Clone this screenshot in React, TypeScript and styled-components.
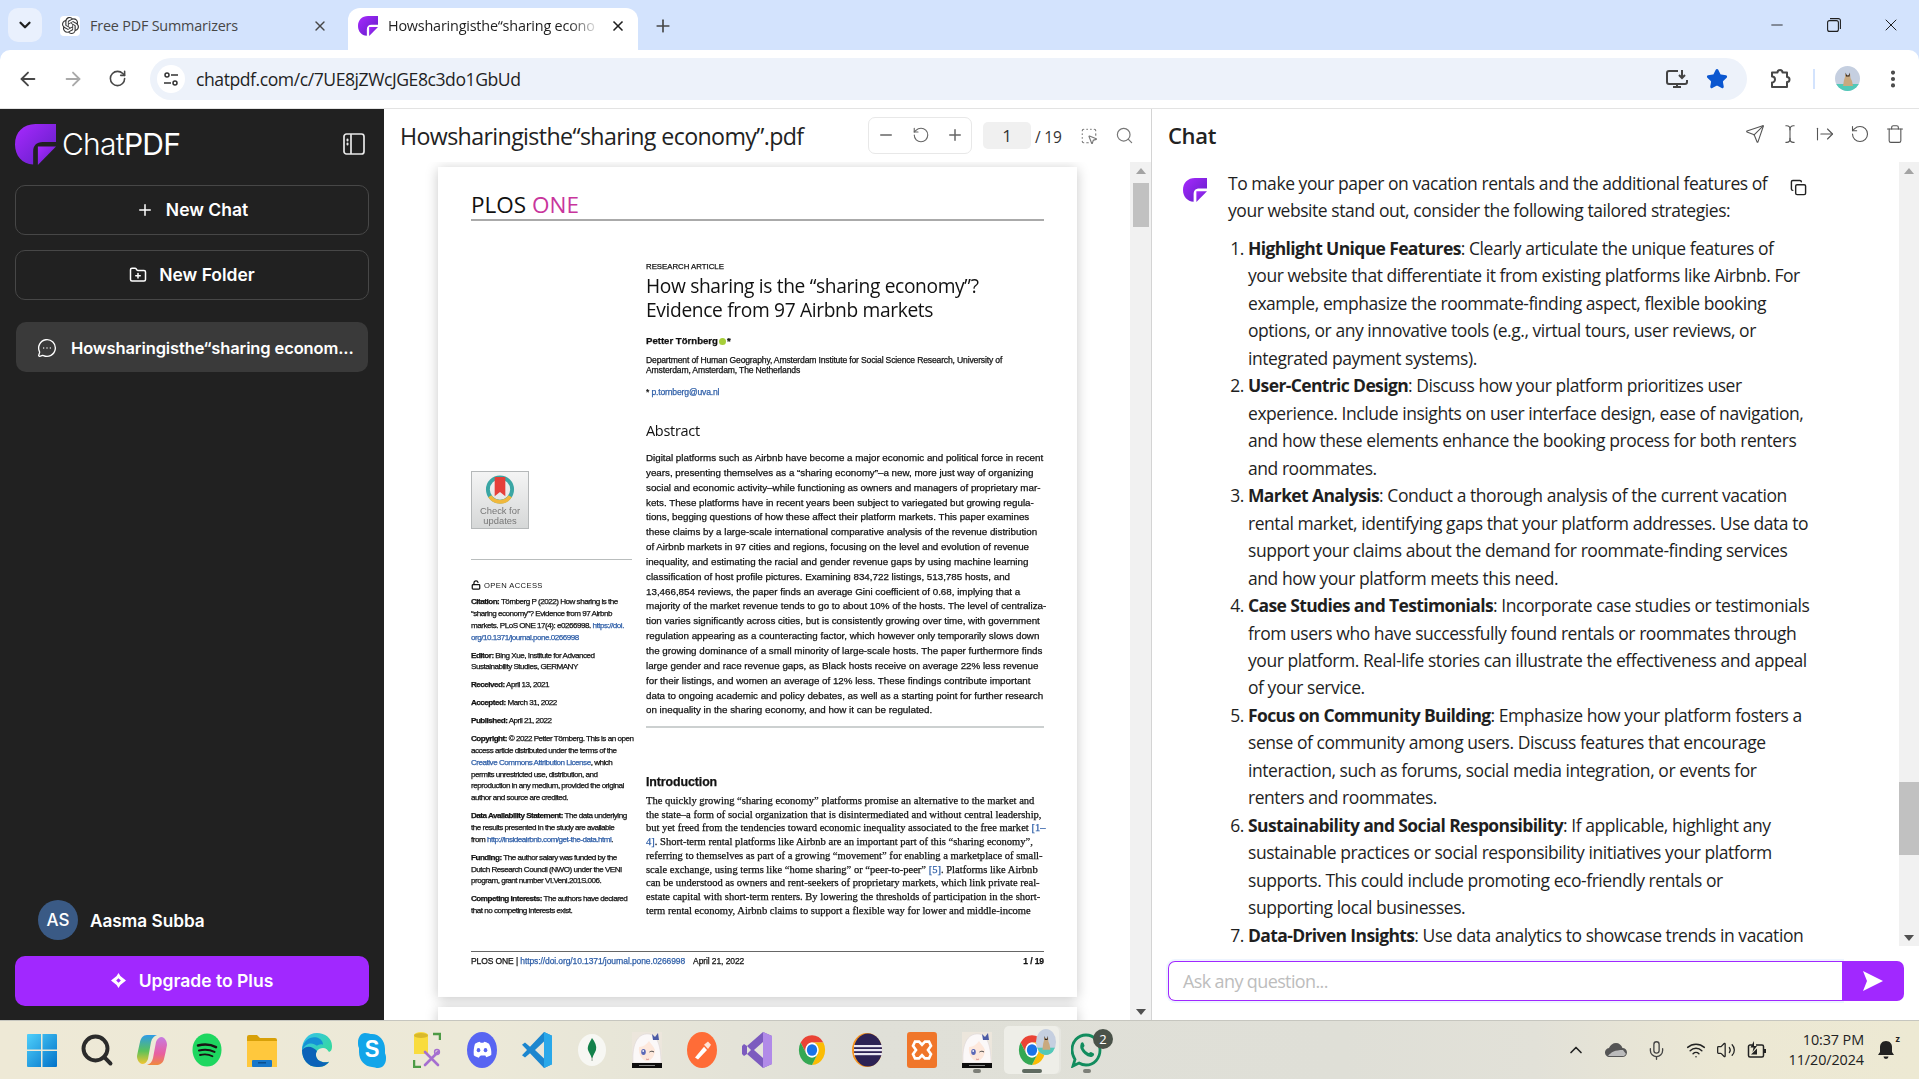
import React from 'react';
import styled, { createGlobalStyle } from 'styled-components';
import {
  ArrowLeft, ArrowRight, RotateCw, RotateCcw, Star, EllipsisVertical, X, Minus, Plus, ChevronDown, ChevronUp,
  Send, TextCursor, ArrowRightFromLine, Trash, Copy, FolderPlus, MessageCircleMore, Search, Mic, Wifi, Volume2,
  LockOpen, SquareDashedMousePointer,
} from 'lucide-react';
import { SiOpenai } from 'react-icons/si';

const Global = createGlobalStyle`
  html, body { margin: 0; padding: 0; height: 100%; overflow: hidden; background: #fff; }
  * { box-sizing: border-box; }
`;

const Screen = styled.div`
  width: 1919px;
  height: 1079px;
  display: flex;
  flex-direction: column;
  overflow: hidden;
  background: #d3e3fd;
  font-family: 'Open Sans', 'Liberation Sans', sans-serif;
`;

/* browser chrome */
const TabStrip = styled.div`
  height: 50px;
  display: flex;
  align-items: flex-end;
  padding-left: 8px;
  flex: none;
`;
const TabMenu = styled.div`
  width: 34px;
  height: 34px;
  margin-bottom: 8px;
  border-radius: 10px;
  background: #e9f0fd;
  color: #1f1f1f;
  display: flex;
  align-items: center;
  justify-content: center;
`;
const Tab = styled.div<{ $active?: boolean }>`
  width: ${(p) => (p.$active ? '290px' : '298px')};
  height: 42px;
  margin-left: ${(p) => (p.$active ? '0' : '8px')};
  padding: 0 ${(p) => (p.$active ? '12px' : '20px')} 7px 10px;
  display: flex;
  align-items: center;
  gap: 10px;
  border-radius: 12px 12px 0 0;
  background: ${(p) => (p.$active ? '#fff' : 'transparent')};
  color: ${(p) => (p.$active ? '#1f1f1f' : '#474747')};
`;
const TabTitle = styled.div<{ $fade?: boolean }>`
  flex: 1;
  font-size: 14.4px;
  letter-spacing: -0.2px;
  white-space: nowrap;
  ${(p) => p.$fade && 'mask-image: linear-gradient(to right, #000 85%, transparent);'}
`;
const Favicon = styled.div`
  width: 20px;
  height: 20px;
  border-radius: 4px;
  background: #fff;
  color: #333;
  display: flex;
  align-items: center;
  justify-content: center;
  flex: none;
`;
const NewTab = styled.div`
  width: 50px;
  height: 42px;
  padding-bottom: 6px;
  display: flex;
  align-items: center;
  justify-content: center;
  color: #474747;
`;
const WindowControls = styled.div`
  margin-left: auto;
  height: 50px;
  display: flex;
  align-items: center;
  color: #1f1f1f;
`;
const WinButton = styled.div`
  width: 57px;
  display: flex;
  justify-content: center;
`;

const Toolbar = styled.div`
  height: 59px;
  flex: none;
  background: #fff;
  border-radius: 10px 10px 0 0;
  border-bottom: 1px solid #e3e3e3;
  display: flex;
  align-items: center;
  padding: 0 0 1px 5px;
  color: #474747;
`;
const NavButton = styled.div<{ $dim?: boolean }>`
  width: 45px;
  display: flex;
  justify-content: center;
  color: ${(p) => (p.$dim ? '#a9a9a9' : '#474747')};
`;
const Omnibox = styled.div`
  width: 1597px;
  height: 42px;
  margin-left: 10px;
  border-radius: 21px;
  background: #edf2fa;
  display: flex;
  align-items: center;
  padding: 0 19px 0 7px;
`;
const SiteInfo = styled.div`
  width: 28px;
  height: 28px;
  border-radius: 50%;
  background: #fff;
  display: flex;
  align-items: center;
  justify-content: center;
  margin-right: 11px;
`;
const Url = styled.div`
  flex: 1;
  font-size: 17.6px;
  letter-spacing: -0.45px;
  color: #1f1f1f;
`;
const OmniIcons = styled.div`
  display: flex;
  align-items: center;
  gap: 18px;
`;
const ToolbarEnd = styled.div`
  display: flex;
  align-items: center;
  margin-left: 21px;
`;
const Divider = styled.div`
  width: 2px;
  height: 20px;
  background: #d3e3fd;
  margin: 0 20px 0 21px;
`;
const ProfilePic = styled.div`
  width: 25px;
  height: 25px;
  border-radius: 50%;
  overflow: hidden;
  flex: none;
  margin-right: 22px;
`;

/* app */
const AppArea = styled.div`
  flex: 1;
  min-height: 0;
  display: flex;
  background: #fff;
`;

const Sidebar = styled.aside`
  width: 384px;
  flex: none;
  background: #212121;
  color: #fff;
  display: flex;
  flex-direction: column;
  padding: 14px 15px;
  font-family: Inter, 'Liberation Sans', sans-serif;
`;
const BrandRow = styled.div`
  height: 42px;
  display: flex;
  align-items: center;
  justify-content: space-between;
  margin-bottom: 20px;
  padding-right: 4px;
`;
const Brand = styled.div`
  display: flex;
  align-items: center;
  gap: 6px;
`;
const BrandName = styled.div`
  font-size: 30px;
  font-weight: 300;
  letter-spacing: -0.75px;
  span { font-weight: 400; }
`;
const SideButton = styled.div`
  height: 50px;
  margin-bottom: 15px;
  padding-bottom: 1px;
  border: 1px solid #474747;
  border-radius: 10px;
  display: flex;
  align-items: center;
  justify-content: center;
  gap: 12px;
  font-size: 17.5px;
  font-weight: 600;
`;
const ChatItem = styled.div`
  height: 50px;
  margin: 7px 1px 0;
  padding: 2px 12px 0 21px;
  border-radius: 10px;
  background: #3a3a3a;
  display: flex;
  align-items: center;
  gap: 14px;
  font-size: 16.5px;
  font-weight: 600;
  letter-spacing: -0.12px;
  white-space: nowrap;
`;
const UserRow = styled.div`
  margin-top: auto;
  padding-left: 23px;
  display: flex;
  align-items: center;
  gap: 12px;
  font-size: 17.2px;
  font-weight: 600;
`;
const Initials = styled.div`
  width: 40px;
  height: 40px;
  border-radius: 50%;
  background: #3a5a85;
  display: flex;
  align-items: center;
  justify-content: center;
  font-size: 17px;
  font-weight: 500;
`;
const Upgrade = styled.div`
  height: 50px;
  margin-top: 16px;
  padding-bottom: 2px;
  border-radius: 10px;
  background: #a128ff;
  display: flex;
  align-items: center;
  justify-content: center;
  gap: 13px;
  font-size: 17.5px;
  font-weight: 600;
`;

/* pdf viewer */
const PdfPanel = styled.section`
  width: 768px;
  flex: none;
  display: flex;
  flex-direction: column;
  border-right: 1px solid #d4d4d4;
  min-height: 0;
`;
const PanelHeader = styled.div`
  height: 53px;
  flex: none;
  display: flex;
  align-items: center;
  padding-left: 16px;
  color: #1f1f1f;
`;
const PdfTitle = styled.div`
  width: 468px;
  font-size: 23.2px;
  font-weight: 500;
  letter-spacing: -0.62px;
  color: #222;
  padding-top: 1px;
  white-space: nowrap;
`;
const ZoomBox = styled.div`
  width: 104px;
  height: 37px;
  margin-top: -1px;
  border: 1px solid #e8e8e8;
  border-radius: 7px;
  display: flex;
  align-items: center;
  justify-content: space-between;
  padding: 0 7px 0 8px;
  color: #666;
`;
const PageInput = styled.div`
  width: 48px;
  height: 27px;
  margin: -1px 0 0 11px;
  border-radius: 5px;
  background: #f0f0f0;
  display: flex;
  align-items: center;
  justify-content: center;
  font-size: 17px;
  color: #333;
`;
const PageCount = styled.div`
  width: 45px;
  margin-left: 4px;
  padding-top: 3px;
  font-size: 15.5px;
  letter-spacing: -0.2px;
  color: #333;
`;
const PdfTool = styled.div`
  width: 35px;
  display: flex;
  color: #777;
`;
const PdfBody = styled.div`
  flex: 1;
  min-height: 0;
  display: flex;
`;
const Pages = styled.div`
  flex: 1;
  overflow: hidden;
  padding: 5px 0 0 54px;
`;
const Page = styled.div`
  width: 639px;
  height: 830px;
  background: #fff;
  box-shadow: 0 2px 12px rgba(0, 0, 0, 0.22);
  padding: 0 33px;
  margin-bottom: 10px;
  display: flex;
  flex-direction: column;
  color: #111;
  font-family: 'Liberation Sans', Arial, sans-serif;
`;
const PlosHead = styled.div`
  height: 54px;
  flex: none;
  border-bottom: 2px solid #aaa;
  padding-top: 23px;
  font-family: 'Open Sans', sans-serif;
  font-size: 22.5px;
  line-height: 30px;
  font-weight: 500;
  letter-spacing: 0;
  span { color: #c8359c; }
`;
const Columns = styled.div`
  display: grid;
  grid-template-columns: 161px 398px;
  column-gap: 14px;
  filter: blur(0.25px);
  -webkit-text-stroke: 0.25px currentColor;
`;
const LeftCol = styled.div`
  display: flex;
  flex-direction: column;
`;
const RightCol = styled.div`
  display: flex;
  flex-direction: column;
`;
const CheckBadge = styled.div`
  width: 58px;
  height: 58px;
  margin-top: 250px;
  border: 1px solid #b5b8b9;
  background: linear-gradient(#f4f4f4, #d6d8d8);
  display: flex;
  flex-direction: column;
  align-items: center;
  padding-top: 3px;
  color: #777;
  font-size: 9.4px;
  line-height: 10px;
  text-align: center;
  -webkit-text-stroke: 0;
`;
const LeftRule = styled.div`
  height: 1px;
  margin-top: 30px;
  background: #b9bdbd;
`;
const OpenAccess = styled.div`
  height: 12px;
  margin-top: 18px;
  display: flex;
  align-items: flex-end;
  gap: 3px;
  font-size: 7.6px;
  line-height: 9px;
  letter-spacing: 0.4px;
  -webkit-text-stroke: 0;
`;
const Meta = styled.div`
  margin-top: 6.2px;
  font-size: 8.1px;
  line-height: 11.8px;
  letter-spacing: -0.5px;
  white-space: nowrap;
  b { font-weight: 700; }
  &:first-of-type { margin-top: 6px; }
`;
const PdfLink = styled.span`
  color: #2f5fa8;
`;
const Kicker = styled.div`
  margin-top: 41px;
  font-size: 7.8px;
  line-height: 10px;
`;
const PaperTitle = styled.div`
  margin-top: 2px;
  font-family: 'Open Sans', sans-serif;
  font-size: 19.2px;
  line-height: 24px;
  letter-spacing: -0.35px;
  white-space: nowrap;
  -webkit-text-stroke: 0;
`;
const Author = styled.div`
  margin-top: 13px;
  font-size: 9.6px;
  line-height: 12px;
  font-weight: 700;
  display: flex;
  align-items: center;
`;
const Orcid = styled.i`
  width: 7px;
  height: 7px;
  margin: 1px 1px 0;
  border-radius: 50%;
  background: #a6ce39;
`;
const Affiliation = styled.div`
  margin-top: 8px;
  font-size: 8.6px;
  line-height: 10px;
  letter-spacing: -0.17px;
  white-space: nowrap;
`;
const Email = styled.div`
  margin-top: 12px;
  font-size: 8.6px;
  line-height: 10px;
  letter-spacing: -0.17px;
`;
const AbstractHead = styled.div`
  margin-top: 25px;
  font-family: 'Open Sans', sans-serif;
  font-size: 14.5px;
  line-height: 18px;
  letter-spacing: -0.3px;
  -webkit-text-stroke: 0;
`;
const AbstractText = styled.div`
  margin-top: 11px;
  font-size: 9.8px;
  line-height: 14.85px;
  letter-spacing: -0.01px;
  white-space: nowrap;
`;
const WideRule = styled.div`
  height: 2px;
  margin-top: 7.6px;
  background: #ccd0d0;
`;
const IntroHead = styled.div`
  margin-top: 46px;
  font-size: 12.4px;
  font-weight: 700;
  line-height: 16px;
  letter-spacing: -0.1px;
`;
const IntroText = styled.div`
  margin-top: 4px;
  font-family: 'Liberation Serif', 'Times New Roman', serif;
  font-size: 10.55px;
  line-height: 13.75px;
  white-space: nowrap;
`;
const PageFooter = styled.div`
  margin-top: auto;
  margin-bottom: 27px;
  border-top: 1px solid #666;
  height: 19px;
  padding-top: 3px;
  display: flex;
  justify-content: space-between;
  font-size: 8.5px;
  line-height: 13px;
  letter-spacing: -0.1px;
  white-space: nowrap;
  filter: blur(0.25px);
  -webkit-text-stroke: 0.25px currentColor;
`;
const FooterLeft = styled.div`
  display: flex;
  gap: 8px;
`;

const ScrollTrack = styled.div<{ $w: number }>`
  width: ${(p) => p.$w}px;
  flex: none;
  background: #f1f1f1;
  display: flex;
  flex-direction: column;
  align-items: center;
`;
const ScrollArrow = styled.div<{ $down?: boolean }>`
  height: 17px;
  flex: none;
  display: flex;
  align-items: center;
  justify-content: center;
  &::before {
    content: '';
    border-left: 5px solid transparent;
    border-right: 5px solid transparent;
    ${(p) => (p.$down ? 'border-top: 6px solid #505050;' : 'border-bottom: 6px solid #a3a3a3;')}
  }
`;
const ScrollSpace = styled.div<{ $h?: number }>`
  ${(p) => (p.$h !== undefined ? `height: ${p.$h}px; flex: none;` : 'flex: 1;')}
`;
const ScrollThumb = styled.div<{ $h: number; $w: number }>`
  width: ${(p) => p.$w}px;
  height: ${(p) => p.$h}px;
  flex: none;
  background: #c1c1c1;
`;

/* chat */
const ChatPanel = styled.section`
  flex: 1;
  min-width: 0;
  display: flex;
  flex-direction: column;
`;
const ChatHeader = styled(PanelHeader)`
  justify-content: space-between;
  padding-right: 14px;
`;
const ChatTitle = styled.div`
  font-size: 22px;
  font-weight: 600;
  letter-spacing: -0.35px;
  padding-bottom: 2px;
  color: #222;
`;
const ChatTools = styled.div`
  display: flex;
  gap: 15px;
  color: #555;
  margin-top: -4px;
`;
const ChatBody = styled.div`
  flex: 1;
  min-height: 0;
  display: flex;
`;
const Messages = styled.div`
  flex: 1;
  overflow: hidden;
  display: flex;
  padding: 8px 0 0 31px;
  font-size: 17.5px;
  line-height: 27.47px;
  letter-spacing: -0.45px;
  color: #1f1f1f;
  white-space: nowrap;
`;
const MsgLogo = styled.div`
  width: 45px;
  flex: none;
  padding-top: 8px;
`;
const MsgContent = styled.div`
  flex: 1;
`;
const Lead = styled.div`
  display: flex;
  align-items: flex-start;
  margin-bottom: 10px;
`;
const CopyBtn = styled.div`
  margin: 9px 0 0 23px;
  color: #222;
  display: flex;
`;
const Steps = styled.ol`
  margin: 0;
  padding-left: 20px;
  b { font-weight: 700; letter-spacing: -0.63px; }
`;
const Composer = styled.div`
  height: 74px;
  flex: none;
  padding: 15px 15px 0 16px;
  display: flex;
`;
const AskInput = styled.div`
  flex: 1;
  height: 40px;
  border: 1.5px solid #a128ff;
  border-right: none;
  border-radius: 7px 0 0 7px;
  box-shadow: 0 0 0 2px #eef5ff;
  padding-left: 14px;
  font-size: 18px;
  line-height: 38px;
  letter-spacing: -0.62px;
  color: #bdbdbd;
`;
const AskSend = styled.div`
  width: 62px;
  height: 40px;
  border-radius: 0 7px 7px 0;
  background: #a128ff;
  display: flex;
  align-items: center;
  justify-content: center;
`;

/* taskbar */
const Taskbar = styled.div`
  height: 59px;
  flex: none;
  border-top: 1px solid #c6c6bf;
  background: linear-gradient(90deg, #eee9d6 0%, #ece9d8 25%, #e0e0d8 45%, #dfdfd7 70%, #e2e1d8 80%, #ece8d4 90%, #ede9d3 100%);
  display: flex;
  align-items: center;
  padding-left: 14px;
`;
const TaskSlot = styled.div<{ $active?: boolean }>`
  position: relative;
  width: 55px;
  height: 48px;
  display: flex;
  align-items: center;
  justify-content: center;
  border-radius: 5px;
  ${(p) => p.$active && 'background: #eeeee8; box-shadow: 2px 0 0 #e6e6e0;'}
`;
const RunDot = styled.i<{ $wide?: boolean }>`
  position: absolute;
  bottom: 1px;
  left: 50%;
  transform: translateX(-50%);
  width: ${(p) => (p.$wide ? '20px' : '8px')};
  height: 4px;
  border-radius: 2px;
  background: ${(p) => (p.$wide ? '#5f6a60' : '#7d7f78')};
`;
const CountBadge = styled.div`
  position: absolute;
  top: 3px;
  right: 1px;
  width: 20px;
  height: 20px;
  border-radius: 50%;
  background: #4a5249;
  color: #fff;
  font-size: 13px;
  line-height: 20px;
  text-align: center;
`;
const ProfileBadge = styled.div`
  position: absolute;
  top: 3px;
  right: 3px;
  width: 20px;
  height: 26px;
  border-radius: 50%;
  overflow: hidden;
`;
const Tray = styled.div`
  margin-left: auto;
  display: flex;
  align-items: center;
  color: #222;
`;
const TrayIcon = styled.div<{ $w: number }>`
  width: ${(p) => p.$w}px;
  display: flex;
  justify-content: center;
`;
const Clock = styled.div`
  width: 88px;
  text-align: right;
  font-size: 14.4px;
  line-height: 20px;
  letter-spacing: -0.1px;
  color: #222;
`;
const Bell = styled.div`
  width: 44px;
  margin-right: 11px;
  display: flex;
  justify-content: center;
`;
const BellWrap = styled.div`
  position: relative;
  display: flex;
`;
const Snooze = styled.span`
  position: absolute;
  top: -6px;
  right: -5px;
  font-size: 9px;
  font-weight: 700;
  line-height: 10px;
`;

const LogoMark = ({ size, id }: { size: number; id: string }) => (
  <svg width={size} height={size} viewBox="0 0 40 40">
    <defs>
      <linearGradient id={id} x1="0" y1="0" x2="1" y2="1">
        <stop offset="0" stopColor="#a829ff" />
        <stop offset="1" stopColor="#5f1fc4" />
      </linearGradient>
    </defs>
    <path d="M0 20C0 8 8 0 20 0H40V17.5H27C21 17.5 17.7 21 17.7 27V39.5C7 39 0 31 0 20Z" fill={`url(#${id})`} />
    <path d="M22.3 22H40L22.3 40Z" fill={`url(#${id})`} />
  </svg>
);

const CatPic = () => (
  <svg width="100%" height="100%" viewBox="0 0 25 25" preserveAspectRatio="none">
    <rect width="25" height="25" fill="#c5cfe0" />
    <rect y="18" width="25" height="7" fill="#52c9b8" />
    <path d="M10 7l1 2h3l1-2 .5 5 1.5 3 1 5H8l1-6 1-3z" fill="#c9a97f" />
    <path d="M10.5 6.5l1.5 3h1.5l1.500-3-.5 4h-3.500z" fill="#2b2320" />
  </svg>
);

const ChromeIcon = ({ size = 30 }: { size?: number }) => (
  <svg width={size} height={size + 4} viewBox="0 0 32 32" preserveAspectRatio="none">
    <path d="M3.88 9A14 14 0 0 1 28.12 9H16A7 7 0 0 0 9.94 19.5Z" fill="#ea4335" />
    <path d="M28.12 9A14 14 0 0 1 16 30L22.06 19.5A7 7 0 0 0 16 9Z" fill="#fbbc04" />
    <path d="M16 30A14 14 0 0 1 3.88 9L9.94 19.5A7 7 0 0 0 22.06 19.5Z" fill="#34a853" />
    <circle cx="16" cy="16" r="7" fill="#fff" />
    <circle cx="16" cy="16" r="5.5" fill="#1a73e8" />
  </svg>
);

const AnimeIcon = () => (
  <svg width="30" height="36" viewBox="0 0 30 36">
    <rect width="30" height="36" fill="#ece6dc" />
    <path d="M1 31C0 15 4 3 14 2c10-1 15 9 15 29z" fill="#fbf8f8" stroke="#ddd6d8" strokeWidth=".6" />
    <path d="M7 15c4 0 8-3 10-6 2 3 5 6 6 9 0 6-4 11-8 11s-9-6-8-14z" fill="#fde8dc" />
    <ellipse cx="11.500" cy="20" rx="2.300" ry="3" fill="#5a69b8" />
    <ellipse cx="11.200" cy="19" rx=".8" ry="1" fill="#fff" />
    <path d="M17.500 20c1.500-1 3-1 4.500 0" stroke="#444" strokeWidth="1" fill="none" />
    <path d="M14 27c1 .6 2 .6 3 0" stroke="#c66" strokeWidth=".7" fill="none" />
    <path d="M20 2l3 3 3-4 1 7-6 0z" fill="#4b5aa5" />
    <rect y="31" width="30" height="5" fill="#0d0d0d" />
    <rect x="7" y="33" width="16" height="1" fill="#888" />
  </svg>
);

const CopilotIcon = () => (
  <svg width="30" height="34" viewBox="0 0 30 34">
    <defs>
      <linearGradient id="cp1" x1="0" y1="0" x2="0" y2="1">
        <stop offset="0" stopColor="#2f9be8" />
        <stop offset=".55" stopColor="#5bc25a" />
        <stop offset="1" stopColor="#f2c531" />
      </linearGradient>
      <linearGradient id="cp2" x1="0" y1="0" x2="0" y2="1">
        <stop offset="0" stopColor="#c77be0" />
        <stop offset=".6" stopColor="#e85fa0" />
        <stop offset="1" stopColor="#f08a3c" />
      </linearGradient>
    </defs>
    <path d="M10 2h10c-3 1-5 3-6 7l-3 17c-1 3-3 5-6 5-3-1-5-4-5-8 1-5 2-10 3-14 1-4 3-7 7-7z" fill="url(#cp1)" />
    <path d="M19 32H10c3-1 5-3 6-7l3-16c1-3 3-5 6-5 3 1 5 4 5 8-1 5-2 10-3 14-1 4-4 6-8 6z" fill="url(#cp2)" />
  </svg>
);

const SpotifyIcon = () => (
  <svg width="30" height="34" viewBox="0 0 30 34">
    <ellipse cx="15" cy="17" rx="14.5" ry="16.5" fill="#1ed760" />
    <g stroke="#191414" fill="none" strokeLinecap="round">
      <path d="M6 12.500c6-1.500 13-1 18 1.600" strokeWidth="2.500" />
      <path d="M7 17.500c5-1.200 11-.8 15.500 1.400" strokeWidth="2.100" />
      <path d="M8 22c4.500-1 9-.6 12.500 1.200" strokeWidth="1.800" />
    </g>
  </svg>
);

const FolderIcon = () => (
  <svg width="30" height="34" viewBox="0 0 30 34">
    <path d="M0 4a2 2 0 0 1 2-2h8l3 3h15a2 2 0 0 1 2 2v6H0z" fill="#d8a008" />
    <path d="M0 8h30v26H0z" fill="#ffc83d" />
    <rect x="5" y="27" width="20" height="7" rx="1" fill="#1877c9" />
    <rect x="11" y="29" width="8" height="1.500" fill="#0b4f8e" />
  </svg>
);

const EdgeIcon = () => (
  <svg width="32" height="36" viewBox="0 0 32 34" preserveAspectRatio="none">
    <defs>
      <linearGradient id="ed1" x1="0" y1="0" x2="1" y2="1">
        <stop offset="0" stopColor="#35c1f1" />
        <stop offset="1" stopColor="#36e27f" />
      </linearGradient>
    </defs>
    <path d="M16 1C7 1 1 8 1 17c0 9 6 16 15 16 5 0 9-1 12-5-3 1-7 1-10-1-3-2-4-6-2-9 1-2 4-3 6-3 3 0 5 2 6 4 3-1 3-4 3-6C31 6 24 1 16 1z" fill="url(#ed1)" />
    <path d="M1 17c0 9 6 16 15 16 5 0 9-1 12-5-3 1-7 1-10-1-3-2-4-6-2-9-4-4-10-6-15-1z" fill="#0b62b8" />
    <path d="M1 17C2 8 9 4 15 5c5 1 7 4 7 7-2-1-5 0-6 1-4-3-10-4-15 4z" fill="#1591d6" />
  </svg>
);

const SkypeIcon = () => (
  <svg width="28" height="36" viewBox="0 0 28 34" preserveAspectRatio="none">
    <path d="M7 1c3 0 5 1 7 1 7 0 13 6 13 14 0 2 0 3 0 4 1 2 1 3 1 5 0 5-3 9-8 9-2 0-4-1-6-1-7 0-13-6-13-14 0-1 0-3 0-4-1-1-1-3-1-5C0 5 3 1 7 1z" fill="#12a5e9" />
    <text x="14" y="24" textAnchor="middle" fontFamily="'Liberation Sans', sans-serif" fontSize="22" fontWeight="700" fill="#fff">S</text>
  </svg>
);

const DbToolIcon = () => (
  <svg width="28" height="36" viewBox="0 0 28 36">
    <path d="M1 3a6 2.500 0 0 1 14 0v19H1z" fill="#f9dc3e" />
    <ellipse cx="8" cy="3.500" rx="7" ry="2.500" fill="#d9b92c" />
    <path d="M20 2h7v6M1 28v7h7" fill="none" stroke="#4d9b45" strokeWidth="2.500" />
    <path d="M12 33l13-13M25 33L12 20" stroke="#a56fd0" strokeWidth="2.600" strokeLinecap="round" />
    <circle cx="24" cy="20" r="2.400" fill="none" stroke="#a56fd0" strokeWidth="1.500" />
  </svg>
);

const DiscordIcon = () => (
  <svg width="30" height="36" viewBox="0 0 30 34" preserveAspectRatio="none">
    <ellipse cx="15" cy="17" rx="15" ry="17" fill="#5865f2" />
    <path d="M8 11c2-1 4-1.700 5-1.800l.5 1c1-.1 2-.1 3 0l.5-1c1.200.1 3 .8 5 1.800 2 3.500 2.600 7 2.300 10.500-1.700 1.300-3.500 2-5 2.300l-1-1.500-1.200-.1h-3.200L12.800 22.800l-1 1.500c-1.700-.3-3.300-1-5-2.300C6.500 18 6.800 14.300 8 11z" fill="#fff" />
    <ellipse cx="11.500" cy="17.200" rx="1.800" ry="2" fill="#5865f2" />
    <ellipse cx="18.500" cy="17.200" rx="1.800" ry="2" fill="#5865f2" />
  </svg>
);

const VsCodeIcon = () => (
  <svg width="30" height="36" viewBox="0 0 30 34" preserveAspectRatio="none">
    <path d="M22 0l8 3.500v27L22 34 8 20 3 24l-3-2 5-5-5-5 3-2 5 4z" fill="#1b86cf" />
    <path d="M22 0l8 3.500v27L22 34z" fill="#29a8ea" />
    <path d="M22 9v16l-9-8z" fill="#e7e6da" />
  </svg>
);

const MongoIcon = () => (
  <svg width="28" height="34" viewBox="0 0 28 34">
    <ellipse cx="14" cy="17" rx="14" ry="16" fill="#f7f7f3" />
    <path d="M14 5c3 4 5 8 4 12-1 3-3 5-3.500 8l-1-.2C13 22 11 20 10 17c-1-4 2-8 4-12z" fill="#13814a" />
    <rect x="13.600" y="24" width=".9" height="4" fill="#8a9a8a" />
  </svg>
);

const PostmanIcon = () => (
  <svg width="30" height="36" viewBox="0 0 30 34" preserveAspectRatio="none">
    <ellipse cx="15" cy="17" rx="15" ry="17" fill="#ff6c37" />
    <path d="M8 24l9-10 3 3-9 9z" fill="#fff" />
    <path d="M17 12l4-3 3 3-3 4z" fill="#ffe2d6" />
  </svg>
);

const VsIcon = () => (
  <svg width="30" height="36" viewBox="0 0 30 36">
    <path d="M21 0l9 4v28l-9 4L5 22l-3 2-2-2V14l2-2 3 2z" fill="#7c5bbf" />
    <path d="M21 0l9 4v28l-9 4z" fill="#b18ae8" />
    <path d="M21 10v16l-9-8z" fill="#e4e3db" />
    <path d="M5 14v8l4-4z" fill="#e4e3db" />
  </svg>
);

const EclipseIcon = () => (
  <svg width="31" height="34" viewBox="0 0 31 34">
    <ellipse cx="16" cy="17" rx="15" ry="17" fill="#f7941e" />
    <ellipse cx="17" cy="17" rx="14" ry="16.500" fill="#2c2255" />
    <rect x="3" y="12" width="28" height="2.200" fill="#e9e6f2" />
    <rect x="3" y="16" width="28" height="2.200" fill="#e9e6f2" />
    <rect x="3" y="20" width="28" height="2.200" fill="#e9e6f2" />
  </svg>
);

const XamppIcon = () => (
  <svg width="30" height="36" viewBox="0 0 30 34" preserveAspectRatio="none">
    <rect width="30" height="34" rx="3" fill="#f0762a" />
    <path d="M8 9h4l3 3 3-3h4l2 4-3 4 3 4-2 4h-4l-3-3-3 3H8l-2-4 3-4-3-4z" fill="none" stroke="#fff" strokeWidth="2.600" />
  </svg>
);

const WhatsappIcon = () => (
  <svg width="31" height="36" viewBox="0 0 31 36">
    <path d="M15 3c8 0 14 6.500 14 15s-6 15-14 15c-2.500 0-5-.8-7-2l-6 3 2-6.500C2.500 25 1 21.500 1 18 1 9.500 7 3 15 3z" fill="none" stroke="#128c5e" strokeWidth="2.800" />
    <path d="M10 11c1-1 2-1 2.500 0l1 2.500c.2.800-1 1.500-1 2.500 1 2 3 4 5 5 1 0 1.700-1.300 2.500-1l2.500 1.200c.8.500.8 1.500 0 2.500-1.500 1.500-4 1.800-7-.2-3-2-5-4.500-6-7-.6-2 0-4 .5-5.500z" fill="#128c5e" />
  </svg>
);

const WindowsIcon = () => (
  <svg width="30" height="33" viewBox="0 0 30 33">
    <defs>
      <linearGradient id="win" x1="0" y1="0" x2="1" y2="1">
        <stop offset="0" stopColor="#4fd0fb" />
        <stop offset="1" stopColor="#0272c9" />
      </linearGradient>
    </defs>
    <path d="M1 0h13v15.500H0V1a1 1 0 0 1 1-1zM15.500 0H29a1 1 0 0 1 1 1v14.500H15.500zM0 17h14v16H1a1 1 0 0 1-1-1zM15.500 17H30v15a1 1 0 0 1-1 1H15.500z" fill="url(#win)" />
  </svg>
);

const abstractLines = [
  'Digital platforms such as Airbnb have become a major economic and political force in recent',
  'years, presenting themselves as a “sharing economy”–a new, more just way of organizing',
  'social and economic activity–while functioning as owners and managers of proprietary mar-',
  'kets. These platforms have in recent years been subject to variegated but growing regula-',
  'tions, begging questions of how these affect their platform markets. This paper examines',
  'these claims by a large-scale international comparative analysis of the revenue distribution',
  'of Airbnb markets in 97 cities and regions, focusing on the level and evolution of revenue',
  'inequality, and estimating the racial and gender revenue gaps by using machine learning',
  'classification of host profile pictures. Examining 834,722 listings, 513,785 hosts, and',
  '13,466,854 reviews, the paper finds an average Gini coefficient of 0.68, implying that a',
  'majority of the market revenue tends to go to about 10% of the hosts. The level of centraliza-',
  'tion varies significantly across cities, but is consistently growing over time, with government',
  'regulation appearing as a counteracting factor, which however only temporarily slows down',
  'the growing dominance of a small minority of large-scale hosts. The paper furthermore finds',
  'large gender and race revenue gaps, as Black hosts receive on average 22% less revenue',
  'for their listings, and women an average of 12% less. These findings contribute important',
  'data to ongoing academic and policy debates, as well as a starting point for further research',
  'on inequality in the sharing economy, and how it can be regulated.',
];

const steps = [
  { head: 'Highlight Unique Features', lines: [': Clearly articulate the unique features of', 'your website that differentiate it from existing platforms like Airbnb. For', 'example, emphasize the roommate-finding aspect, flexible booking', 'options, or any innovative tools (e.g., virtual tours, user reviews, or', 'integrated payment systems).'] },
  { head: 'User-Centric Design', lines: [': Discuss how your platform prioritizes user', 'experience. Include insights on user interface design, ease of navigation,', 'and how these elements enhance the booking process for both renters', 'and roommates.'] },
  { head: 'Market Analysis', lines: [': Conduct a thorough analysis of the current vacation', 'rental market, identifying gaps that your platform addresses. Use data to', 'support your claims about the demand for roommate-finding services', 'and how your platform meets this need.'] },
  { head: 'Case Studies and Testimonials', lines: [': Incorporate case studies or testimonials', 'from users who have successfully found rentals or roommates through', 'your platform. Real-life stories can illustrate the effectiveness and appeal', 'of your service.'] },
  { head: 'Focus on Community Building', lines: [': Emphasize how your platform fosters a', 'sense of community among users. Discuss features that encourage', 'interaction, such as forums, social media integration, or events for', 'renters and roommates.'] },
  { head: 'Sustainability and Social Responsibility', lines: [': If applicable, highlight any', 'sustainable practices or social responsibility initiatives your platform', 'supports. This could include promoting eco-friendly rentals or', 'supporting local businesses.'] },
  { head: 'Data-Driven Insights', lines: [': Use data analytics to showcase trends in vacation'] },
];

export default function App() {
  return (
    <Screen>
      <Global />
      <TabStrip>
        <TabMenu><ChevronDown size={18} strokeWidth={3} /></TabMenu>
        <Tab>
          <Favicon><SiOpenai size={17} /></Favicon>
          <TabTitle>Free PDF Summarizers</TabTitle>
          <X size={16} strokeWidth={2} />
        </Tab>
        <Tab $active>
          <Favicon><LogoMark size={20} id="favGrad" /></Favicon>
          <TabTitle $fade>Howsharingisthe“sharing econo</TabTitle>
          <X size={16} strokeWidth={2.5} />
        </Tab>
        <NewTab><Plus size={20} strokeWidth={2} /></NewTab>
        <WindowControls>
          <WinButton><Minus size={18} strokeWidth={1.2} /></WinButton>
          <WinButton>
            <svg width="14" height="14" viewBox="0 0 14 14" fill="none" stroke="#1f1f1f" strokeWidth="1.1">
              <rect x=".6" y="2.600" width="10.800" height="10.800" rx="2" />
              <path d="M3 .6h8.400a2 2 0 0 1 2 2V11" />
            </svg>
          </WinButton>
          <WinButton><X size={20} strokeWidth={1.2} /></WinButton>
        </WindowControls>
      </TabStrip>

      <Toolbar>
        <NavButton><ArrowLeft size={22} /></NavButton>
        <NavButton $dim><ArrowRight size={22} /></NavButton>
        <NavButton><RotateCw size={19} /></NavButton>
        <Omnibox>
          <SiteInfo>
            <svg width="16" height="16" viewBox="0 0 16 16" fill="none" stroke="#333" strokeWidth="1.5">
              <circle cx="4" cy="4" r="2" /><path d="M8 4h7M1 12h7" /><circle cx="12" cy="12" r="2" />
            </svg>
          </SiteInfo>
          <Url>chatpdf.com/c/7UE8jZWcJGE8c3do1GbUd</Url>
          <OmniIcons>
            <svg width="22" height="20" viewBox="0 0 22 20" fill="none" stroke="#444" strokeWidth="2">
              <path d="M12 2H3a2 2 0 0 0-2 2v9a2 2 0 0 0 2 2h16a2 2 0 0 0 2-2v-2M11 15v3M7 18h8" />
              <path d="M16 1v8M13 6l3 3 3-3" />
            </svg>
            <Star size={22} fill="#0b57d0" color="#0b57d0" />
          </OmniIcons>
        </Omnibox>
        <ToolbarEnd>
          <svg width="24" height="24" viewBox="0 0 24 24" fill="none" stroke="#474747" strokeWidth="2" strokeLinejoin="round">
            <path d="M4 5.500H9.500a2.500 2.500 0 0 1 5 0H19V10a2.500 2.500 0 0 1 0 5v5H4V15.500a3 3 0 0 0 0-6z" />
          </svg>
          <Divider />
          <ProfilePic><CatPic /></ProfilePic>
          <EllipsisVertical size={22} strokeWidth={2.5} />
        </ToolbarEnd>
      </Toolbar>

      <AppArea>
        <Sidebar>
          <BrandRow>
            <Brand>
              <LogoMark size={41} id="brandGrad" />
              <BrandName>Chat<span>PDF</span></BrandName>
            </Brand>
            <svg width="22" height="22" viewBox="0 0 22 22" fill="none" stroke="#e8e8e8" strokeWidth="1.7">
              <rect x="1" y="1" width="20" height="20" rx="2.500" />
              <path d="M8 1v20" />
              <path d="M4.500 6.500v1M4.500 10.500v1" strokeLinecap="round" strokeWidth="2" />
            </svg>
          </BrandRow>
          <SideButton><Plus size={18} />New Chat</SideButton>
          <SideButton><FolderPlus size={18} />New Folder</SideButton>
          <ChatItem>
            <MessageCircleMore size={20} strokeWidth={1.6} />
            Howsharingisthe“sharing econom...
          </ChatItem>
          <UserRow><Initials>AS</Initials>Aasma Subba</UserRow>
          <Upgrade>
            <svg width="15" height="15" viewBox="0 0 16 16" fill="#fff">
              <path d="M8 0l2 3.200L16 8l-6 4.800L8 16l-2-3.200L0 8l6-4.800zM8 5.500L5.500 8 8 10.500 10.500 8z" />
            </svg>
            Upgrade to Plus
          </Upgrade>
        </Sidebar>

        <PdfPanel>
          <PanelHeader>
            <PdfTitle>Howsharingisthe“sharing economy”.pdf</PdfTitle>
            <ZoomBox>
              <Minus size={18} />
              <RotateCcw size={18} strokeWidth={1.5} />
              <Plus size={18} />
            </ZoomBox>
            <PageInput>1</PageInput>
            <PageCount>/ 19</PageCount>
            <PdfTool><SquareDashedMousePointer size={18} strokeWidth={1.5} /></PdfTool>
            <PdfTool><Search size={19} strokeWidth={1.5} /></PdfTool>
          </PanelHeader>
          <PdfBody>
            <Pages>
              <Page>
                <PlosHead>PLOS <span>ONE</span></PlosHead>
                <Columns>
                  <LeftCol>
                    <CheckBadge>
                      <svg width="32" height="31" viewBox="0 0 32 32">
                        <circle cx="16" cy="15" r="12.500" fill="none" stroke="#3aa6a4" strokeWidth="4" />
                        <path d="M5.500 22A12.500 12.500 0 0 0 26.500 22" fill="none" stroke="#f0b83c" strokeWidth="4" />
                        <path d="M10.500 2h11v20l-5.500-4.500L10.500 22z" fill="#e5403a" />
                      </svg>
                      Check for<br />updates
                    </CheckBadge>
                    <LeftRule />
                    <OpenAccess><LockOpen size={10} strokeWidth={3} />OPEN ACCESS</OpenAccess>
                    <Meta><b>Citation:</b> Törnberg P (2022) How sharing is the<br />“sharing economy”? Evidence from 97 Airbnb<br />markets. PLoS ONE 17(4): e0266998. <PdfLink>https://doi.</PdfLink><br /><PdfLink>org/10.1371/journal.pone.0266998</PdfLink></Meta>
                    <Meta><b>Editor:</b> Bing Xue, Institute for Advanced<br />Sustainability Studies, GERMANY</Meta>
                    <Meta><b>Received:</b> April 13, 2021</Meta>
                    <Meta><b>Accepted:</b> March 31, 2022</Meta>
                    <Meta><b>Published:</b> April 21, 2022</Meta>
                    <Meta><b>Copyright:</b> © 2022 Petter Törnberg. This is an open<br />access article distributed under the terms of the<br /><PdfLink>Creative Commons Attribution License</PdfLink>, which<br />permits unrestricted use, distribution, and<br />reproduction in any medium, provided the original<br />author and source are credited.</Meta>
                    <Meta><b>Data Availability Statement:</b> The data underlying<br />the results presented in the study are available<br />from <PdfLink>http://insideairbnb.com/get-the-data.html</PdfLink>.</Meta>
                    <Meta><b>Funding:</b> The author salary was funded by the<br />Dutch Research Council (NWO) under the VENI<br />program, grant number VI.Veni.201S.006.</Meta>
                    <Meta><b>Competing interests:</b> The authors have declared<br />that no competing interests exist.</Meta>
                  </LeftCol>
                  <RightCol>
                    <Kicker>RESEARCH ARTICLE</Kicker>
                    <PaperTitle>How sharing is the “sharing economy”?<br />Evidence from 97 Airbnb markets</PaperTitle>
                    <Author>Petter Törnberg<Orcid />*</Author>
                    <Affiliation>Department of Human Geography, Amsterdam Institute for Social Science Research, University of<br />Amsterdam, Amsterdam, The Netherlands</Affiliation>
                    <Email>* <PdfLink>p.tornberg@uva.nl</PdfLink></Email>
                    <AbstractHead>Abstract</AbstractHead>
                    <AbstractText>
                      {abstractLines.map((l) => <div key={l}>{l}</div>)}
                    </AbstractText>
                    <WideRule />
                    <IntroHead>Introduction</IntroHead>
                    <IntroText>
                      The quickly growing “sharing economy” platforms promise an alternative to the market and<br />
                      the state–a form of social organization that is disintermediated and without central leadership,<br />
                      but yet freed from the tendencies toward economic inequality associated to the free market <PdfLink>[1–</PdfLink><br />
                      <PdfLink>4]</PdfLink>. Short-term rental platforms like Airbnb are an important part of this “sharing economy”,<br />
                      referring to themselves as part of a growing “movement” for enabling a marketplace of small-<br />
                      scale exchange, using terms like “home sharing” or “peer-to-peer” <PdfLink>[5]</PdfLink>. Platforms like Airbnb<br />
                      can be understood as owners and rent-seekers of proprietary markets, which link private real-<br />
                      estate capital with short-term renters. By lowering the thresholds of participation in the short-<br />
                      term rental economy, Airbnb claims to support a flexible way for lower and middle-income
                    </IntroText>
                  </RightCol>
                </Columns>
                <PageFooter>
                  <FooterLeft>
                    <span>PLOS ONE | <PdfLink>https://doi.org/10.1371/journal.pone.0266998</PdfLink></span>
                    <span>April 21, 2022</span>
                  </FooterLeft>
                  <b>1 / 19</b>
                </PageFooter>
              </Page>
              <Page />
            </Pages>
            <ScrollTrack $w={21}>
              <ScrollArrow />
              <ScrollSpace $h={4} />
              <ScrollThumb $w={16} $h={44} />
              <ScrollSpace />
              <ScrollArrow $down />
            </ScrollTrack>
          </PdfBody>
        </PdfPanel>

        <ChatPanel>
          <ChatHeader>
            <ChatTitle>Chat</ChatTitle>
            <ChatTools>
              <Send size={20} strokeWidth={1.3} />
              <TextCursor size={20} strokeWidth={1.3} />
              <ArrowRightFromLine size={20} strokeWidth={1.3} />
              <RotateCcw size={20} strokeWidth={1.3} />
              <Trash size={20} strokeWidth={1.3} />
            </ChatTools>
          </ChatHeader>
          <ChatBody>
            <Messages>
              <MsgLogo><LogoMark size={24} id="msgGrad" /></MsgLogo>
              <MsgContent>
                <Lead>
                  <div>
                    To make your paper on vacation rentals and the additional features of<br />
                    your website stand out, consider the following tailored strategies:
                  </div>
                  <CopyBtn><Copy size={17} strokeWidth={2} /></CopyBtn>
                </Lead>
                <Steps>
                  {steps.map((s) => (
                    <li key={s.head}>
                      <b>{s.head}</b>
                      {s.lines.map((l, i) => (
                        <React.Fragment key={l}>{i > 0 && <br />}{l}</React.Fragment>
                      ))}
                    </li>
                  ))}
                </Steps>
              </MsgContent>
            </Messages>
            <ScrollTrack $w={20}>
              <ScrollArrow />
              <ScrollSpace />
              <ScrollThumb $w={20} $h={73} />
              <ScrollSpace $h={74} />
              <ScrollArrow $down />
            </ScrollTrack>
          </ChatBody>
          <Composer>
            <AskInput>Ask any question...</AskInput>
            <AskSend>
              <svg width="20" height="20" viewBox="0 0 20 20" fill="#fff">
                <path d="M0 0l20 10L0 20l4-10z" />
              </svg>
            </AskSend>
          </Composer>
        </ChatPanel>
      </AppArea>

      <Taskbar>
        <TaskSlot><WindowsIcon /></TaskSlot>
        <TaskSlot><Search size={36} strokeWidth={2.6} color="#2b2b2b" /></TaskSlot>
        <TaskSlot><CopilotIcon /></TaskSlot>
        <TaskSlot><SpotifyIcon /></TaskSlot>
        <TaskSlot><FolderIcon /></TaskSlot>
        <TaskSlot><EdgeIcon /></TaskSlot>
        <TaskSlot><SkypeIcon /></TaskSlot>
        <TaskSlot><DbToolIcon /></TaskSlot>
        <TaskSlot><DiscordIcon /></TaskSlot>
        <TaskSlot><VsCodeIcon /></TaskSlot>
        <TaskSlot><MongoIcon /></TaskSlot>
        <TaskSlot><AnimeIcon /></TaskSlot>
        <TaskSlot><PostmanIcon /></TaskSlot>
        <TaskSlot><VsIcon /></TaskSlot>
        <TaskSlot><ChromeIcon /></TaskSlot>
        <TaskSlot><EclipseIcon /></TaskSlot>
        <TaskSlot><XamppIcon /></TaskSlot>
        <TaskSlot><AnimeIcon /><RunDot /></TaskSlot>
        <TaskSlot $active>
          <ChromeIcon />
          <ProfileBadge><CatPic /></ProfileBadge>
          <RunDot $wide />
        </TaskSlot>
        <TaskSlot><WhatsappIcon /><CountBadge>2</CountBadge><RunDot /></TaskSlot>
        <Tray>
          <TrayIcon $w={44}><ChevronUp size={20} strokeWidth={2} /></TrayIcon>
          <TrayIcon $w={36}>
            <svg width="22" height="14" viewBox="0 0 22 14">
              <path d="M5 14a4.500 4.500 0 0 1-1-9C5 2 8 0 11 0c3 0 5.500 2 6.500 5a4.500 4.500 0 0 1 0 9z" fill="#555" />
              <path d="M3 13c3-4 7-6 15-6l3 4-2 2z" fill="#bbb" />
            </svg>
          </TrayIcon>
          <TrayIcon $w={44}><Mic size={21} strokeWidth={1.5} color="#444" /></TrayIcon>
          <TrayIcon $w={36}><Wifi size={20} strokeWidth={1.8} /></TrayIcon>
          <TrayIcon $w={24}><Volume2 size={20} strokeWidth={1.5} /></TrayIcon>
          <TrayIcon $w={38}>
            <svg width="20" height="18" viewBox="0 0 20 18" fill="none" stroke="#222" strokeWidth="1.5">
              <path d="M5 4H3a1.500 1.500 0 0 0-1.500 1.500v9A1.500 1.500 0 0 0 3 16h12a1.500 1.500 0 0 0 1.500-1.500v-9A1.500 1.500 0 0 0 15 4H9" />
              <path d="M18 8v4" strokeWidth="2" />
              <path d="M7 0L3.500 6.500h3L5.500 11 10 5H7z" fill="#222" stroke="none" />
              <path d="M4 13.500l6-6v6z" fill="#222" stroke="none" />
            </svg>
          </TrayIcon>
          <Clock>10:37 PM<br />11/20/2024</Clock>
          <Bell>
            <BellWrap>
              <svg width="18" height="20" viewBox="0 0 18 20" fill="#222">
                <path d="M9 1c4 0 6 3 6 6v5l2 3H1l2-3V7c0-3 2-6 6-6zM6.500 16.500h5A2.500 2.500 0 0 1 6.500 16.500z" />
              </svg>
              <Snooze>z</Snooze>
            </BellWrap>
          </Bell>
        </Tray>
      </Taskbar>
    </Screen>
  );
}
